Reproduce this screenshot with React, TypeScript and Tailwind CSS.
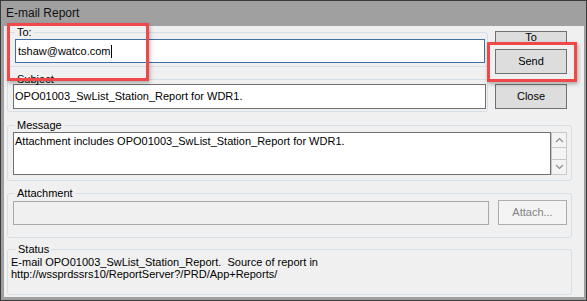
import type { ReactNode } from "react";

function GroupBox({
  label,
  className,
  legendClass,
  children,
}: {
  label: string;
  className: string;
  legendClass: string;
  children: ReactNode;
}) {
  return (
    <fieldset className={"border border-[#d5dfe5] rounded-[3px] " + className}>
      <legend className={"px-[2px] leading-[13px] " + legendClass}>{label}</legend>
      {children}
    </fieldset>
  );
}

function Chevron({ up }: { up?: boolean }) {
  return (
    <svg width="9" height="6" viewBox="0 0 9 6">
      <polyline
        points={up ? "1,5 4.5,1.5 8,5" : "1,1 4.5,4.5 8,1"}
        fill="none"
        stroke="#8c8c8c"
        strokeWidth="1.2"
      />
    </svg>
  );
}

function App() {
  return (
    <div className="relative w-[587px] h-[301px] overflow-hidden border border-[#3a3a3a] bg-[#a0a0a0] pl-[3px] pr-[2px] pb-[3px] flex flex-col font-['Liberation_Sans',Arial,sans-serif] text-[11px] text-black">
      {/* Title bar */}
      <div className="h-[25px] shrink-0 pl-[2px] pt-[5px] text-[12px] leading-[14px] text-[#111]">
        E-mail Report
      </div>

      {/* Body */}
      <div className="flex-1 bg-[#f0f0f0] pl-[3px] pr-[12px] pb-[2px] flex flex-col">
        <div className="flex gap-[7px]">
          <div className="w-[481px] flex flex-col">
            <GroupBox label="To:" className="pl-[7px] pr-[2px] pb-[3px]" legendClass="">
              <div className="h-[24px] border border-[#3d71a3] bg-white flex items-center pl-[2px]">
                tshaw@watco.com
                <span className="w-px h-[13px] bg-black ml-[1px]" />
              </div>
            </GroupBox>
            <GroupBox label="Subject" className="mt-[6px] pl-[5px] pr-[1px] pb-[2px]" legendClass="ml-[2px]">
              <div className="-mt-[2px] h-[25px] border border-[#707070] bg-white flex items-center pl-[1px]">
                OPO01003_SwList_Station_Report for WDR1.
              </div>
            </GroupBox>
          </div>

          <div className="w-[72px] flex flex-col pt-[5px]">
            <button className="h-[13px] overflow-hidden border border-[#707070] bg-[#dddddd] leading-[9px] text-center">
              To
            </button>
            <button className="mt-[5px] h-[25px] border border-[#707070] bg-[#dddddd]">Send</button>
            <button className="mt-[10px] h-[25px] border border-[#707070] bg-[#dddddd]">Close</button>
          </div>
        </div>

        <GroupBox label="Message" className="mt-[7px] pl-[5px] pr-[4px] pb-[5px]" legendClass="ml-[2px]">
          <div className="flex h-[43px]">
            <div className="flex-1 border border-[#707070] bg-white pl-[1px] pt-[2px] leading-[13px]">
              Attachment includes OPO01003_SwList_Station_Report for WDR1.
            </div>
            <div className="w-[16px] border border-[#c8c8c8] bg-[#f4f4f4] flex flex-col justify-between">
              <div className="h-[15px] border-b border-[#c8c8c8] flex items-center justify-center">
                <Chevron up />
              </div>
              <div className="h-[15px] border-t border-[#c8c8c8] flex items-center justify-center">
                <Chevron />
              </div>
            </div>
          </div>
        </GroupBox>

        <GroupBox label="Attachment" className="mt-[6px] pl-[5px] pr-[4px] pb-[12px]" legendClass="ml-[2px]">
          <div className="flex h-[25px] gap-[9px]">
            <div className="flex-1 mt-[1px] h-[24px] border border-[#a8a8a8] bg-[#f0f0f0]" />
            <button className="w-[69px] h-[25px] border border-[#adadad] bg-[#f4f4f4] text-[#838383]">
              Attach...
            </button>
          </div>
        </GroupBox>

        <GroupBox label="Status" className="mt-[5px] pl-[3px] pr-[4px] pb-[14px]" legendClass="ml-[5px]">
          <div className="leading-[12px]">
            <div className="whitespace-pre">E-mail OPO01003_SwList_Station_Report.  Source of report in</div>
            <div>http://wssprdssrs10/ReportServer?/PRD/App+Reports/</div>
          </div>
        </GroupBox>
      </div>

      {/* Red annotation boxes */}
      <div className="absolute left-[6px] top-[22px] w-[142px] h-[58px] border-[3px] border-[#f04848] shadow-[1px_2px_4px_rgba(0,0,0,0.3)]" />
      <div className="absolute left-[486px] top-[41px] w-[90px] h-[40px] border-[3px] border-[#f04848] shadow-[1px_2px_4px_rgba(0,0,0,0.3)]" />
    </div>
  );
}

export default App;
